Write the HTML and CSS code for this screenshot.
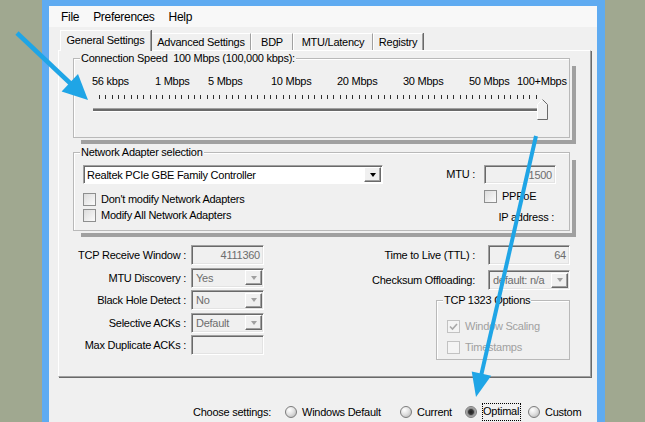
FILE: index.html
```html
<!DOCTYPE html>
<html lang="en">
<head>
    <meta charset="UTF-8">
    <title>TCP Optimizer</title>
    <link rel="stylesheet" href="styles.css">
</head>
<body>
    <div class="window">
        <div class="menubar">
            <span class="menu-item">File</span>
            <span class="menu-item">Preferences</span>
            <span class="menu-item">Help</span>
        </div>

        <div class="tabs">
            <span class="tab active tab-general">General Settings</span>
            <span class="tab tab-advanced">Advanced Settings</span>
            <span class="tab tab-bdp">BDP</span>
            <span class="tab tab-mtu">MTU/Latency</span>
            <span class="tab tab-registry">Registry</span>
        </div>

        <div class="panel">
            <div class="group group-speed">
                <span class="group-title">Connection Speed&nbsp; 100 Mbps (100,000 kbps):</span>
                <div class="speed-scale">
                    <span>56 kbps</span>
                    <span>1 Mbps</span>
                    <span>5 Mbps</span>
                    <span>10 Mbps</span>
                    <span>20 Mbps</span>
                    <span>30 Mbps</span>
                    <span>50 Mbps</span>
                    <span>100+Mbps</span>
                </div>
                <svg class="ticks" width="444" height="4" viewBox="0 0 444 4">
                    <path shape-rendering="crispEdges" stroke="#2e2e2e" stroke-width="1" fill="none"
                        d="M0.5 0v4m6.33-4v4m6.33-4v4m6.33-4v4m6.33-4v4m6.33-4v4m6.33-4v4m6.33-4v4m6.33-4v4m6.33-4v4m6.33-4v4m6.33-4v4m6.33-4v4m6.33-4v4m6.33-4v4m6.33-4v4m6.33-4v4m6.33-4v4m6.33-4v4m6.33-4v4m6.33-4v4m6.33-4v4m6.33-4v4m6.33-4v4m6.33-4v4m6.33-4v4m6.33-4v4m6.33-4v4m6.33-4v4m6.33-4v4m6.33-4v4m6.33-4v4m6.33-4v4m6.33-4v4m6.33-4v4m6.33-4v4m6.33-4v4m6.33-4v4m6.33-4v4m6.33-4v4m6.33-4v4m6.33-4v4m6.33-4v4m6.33-4v4m6.33-4v4m6.33-4v4m6.33-4v4m6.33-4v4m6.33-4v4m6.33-4v4m6.33-4v4m6.33-4v4m6.33-4v4m6.33-4v4m6.33-4v4m6.33-4v4m6.33-4v4m6.33-4v4m6.33-4v4m6.33-4v4m6.33-4v4m6.33-4v4m6.33-4v4m6.33-4v4m6.33-4v4m6.33-4v4m6.33-4v4m6.33-4v4m6.33-4v4m6.33-4v4"/>
                </svg>
                <div class="slider">
                    <div class="track"></div>
                    <svg class="thumb" width="11" height="21" viewBox="0 0 11 21">
                        <path d="M0.5 5.5L5.5 0.5L10.5 5.5V20.5H0.5Z" fill="#f0f0f0"/>
                        <path d="M0.5 20V5.5L5.5 0.5" stroke="#fff" fill="none"/>
                        <path d="M5.5 0.5L10.5 5.5V20.5H0.5" stroke="#6a6a6a" fill="none"/>
                    </svg>
                </div>
            </div>

            <div class="group group-adapter">
                <span class="group-title">Network Adapter selection</span>
                <div class="adapter-body">
                    <div class="adapter-left">
                        <div class="combo">
                            <span class="combo-text">Realtek PCIe GBE Family Controller</span>
                            <span class="combo-btn"></span>
                        </div>
                        <label class="check first"><span class="box"></span>Don't modify Network Adapters</label>
                        <label class="check"><span class="box"></span>Modify All Network Adapters</label>
                    </div>
                    <div class="adapter-right">
                        <span class="row-label">MTU :</span>
                        <span class="field num mtu">1500</span>
                        <label class="check pppoe"><span class="box"></span>PPPoE</label>
                        <span class="ip-label">IP address :</span>
                    </div>
                </div>
            </div>

            <div class="tcp">
                <div class="tcp-left">
                    <span class="row-label">TCP Receive Window :</span>
                    <span class="field num">4111360</span>
                    <span class="row-label">MTU Discovery :</span>
                    <span class="field select"><span>Yes</span><span class="select-btn"></span></span>
                    <span class="row-label">Black Hole Detect :</span>
                    <span class="field select"><span>No</span><span class="select-btn"></span></span>
                    <span class="row-label">Selective ACKs :</span>
                    <span class="field select"><span>Default</span><span class="select-btn"></span></span>
                    <span class="row-label">Max Duplicate ACKs :</span>
                    <span class="field"></span>
                </div>
                <div class="tcp-right">
                    <span class="row-label">Time to Live (TTL) :</span>
                    <span class="field num">64</span>
                    <span class="row-label">Checksum Offloading:</span>
                    <span class="field select"><span>default: n/a</span><span class="select-btn"></span></span>
                    <div class="group group-options">
                        <span class="group-title">TCP 1323 Options</span>
                        <label class="check disabled first">
                            <span class="box">
                                <svg width="11" height="11" viewBox="0 0 11 11"><path d="M2 5.5L4.5 8L9 3" stroke="#a8a8a8" stroke-width="1.6" fill="none"/></svg>
                            </span>Window Scaling
                        </label>
                        <label class="check disabled"><span class="box"></span>Timestamps</label>
                    </div>
                </div>
            </div>
        </div>

        <div class="choose">
            <span>Choose settings:</span>
            <span class="option"><span class="radio"></span>Windows Default</span>
            <span class="option"><span class="radio"></span>Current</span>
            <span class="option"><span class="radio checked"></span><span class="focus">Optimal</span></span>
            <span class="option"><span class="radio"></span>Custom</span>
        </div>
    </div>

    <svg class="arrows" width="645" height="422" viewBox="0 0 645 422">
        <line x1="17" y1="33" x2="71" y2="84" stroke="#1fa5e6" stroke-width="4.5"/>
        <polygon points="88,100 61.6,91.5 78,74.1" fill="#1fa5e6"/>
        <line x1="536" y1="136" x2="481" y2="376" stroke="#1fa5e6" stroke-width="4"/>
        <polygon points="476,397 491.2,375.8 471.7,371.4" fill="#1fa5e6"/>
    </svg>
</body>
</html>
```

FILE: styles.css
```css
* {
    box-sizing: border-box;
}

body {
    margin: 0;
    width: 645px;
    height: 422px;
    overflow: hidden;
    position: relative;
    background-color: #a0a890;
    font-family: "Liberation Sans", Arial, sans-serif;
    font-size: 11px;
    letter-spacing: -0.25px;
    color: #000;
}

.window {
    margin-left: 42px;
    width: 563px;
    height: 422px;
    border-style: solid;
    border-color: #5fabf1;
    border-width: 6px 8px 0 7px;
    background-color: #f0f0f0;
}

/* menu */
.menubar {
    display: flex;
    align-items: center;
    height: 21px;
    padding-left: 5px;
    background-color: #f8f8f8;
    font-size: 12px;
    letter-spacing: -0.3px;
}

.menu-item {
    padding: 0 7px;
}

/* tabs */
.tabs {
    display: flex;
    align-items: flex-end;
    height: 23px;
    margin-left: 9px;
    padding-left: 2px;
}

.tab {
    height: 17px;
    line-height: 16px;
    text-align: center;
    border-top: 1px solid #fff;
    border-left: 1px solid #fff;
    border-right: 1px solid #a0a0a0;
    box-shadow: 1px 0 0 #696969;
    background-color: #f0f0f0;
}

.tab.active {
    position: relative;
    z-index: 1;
    height: 21px;
    line-height: 18px;
    margin-bottom: -1px;
}

.tab-general { width: 91px; }
.tab-advanced { width: 100px; }
.tab-bdp { width: 42px; }
.tab-mtu { width: 80px; }
.tab-registry { width: 50px; }

.panel {
    margin-left: 9px;
    width: 533px;
    height: 327px;
    border: 1px solid;
    border-color: #fff #a0a0a0 #a0a0a0 #fff;
    box-shadow: 1px 1px 0 #696969;
}

/* group boxes */
.group {
    margin: 7px 0 0 14px;
    width: 497px;
    height: 80px;
    border: 1px solid #b9b9b9;
    box-shadow: inset 1px 1px 0 #fff, 2px 2px 0 #f0f0f0, 7px 7px 0 -1px #a0a0a0;
}

.group-title {
    display: block;
    width: max-content;
    margin: -7px 0 0 6px;
    padding: 0 1px;
    line-height: 13px;
    background-color: #f0f0f0;
}

.speed-scale {
    display: grid;
    grid-template-columns: 63px 53px 63px 66px 66px 66px 48px auto;
    margin-top: 10px;
    padding-left: 18px;
    line-height: 13px;
}

.ticks {
    display: block;
    margin: 7px 0 0 25px;
}

.slider {
    display: flex;
    align-items: center;
    height: 21px;
    margin-left: 19px;
}

.track {
    width: 444px;
    height: 4px;
    border-top: 1px solid #a0a0a0;
    border-bottom: 1px solid #fff;
    background-color: #6a6a6a;
}

.thumb {
    display: block;
}

.group-adapter {
    margin-top: 14px;
    height: 79px;
}

.adapter-body {
    display: flex;
    justify-content: space-between;
    margin-top: 6px;
    padding: 0 13px 0 9px;
}

.combo {
    display: flex;
    align-items: center;
    width: 300px;
    height: 19px;
    padding: 1px 1px 1px 3px;
    background-color: #fff;
    border: 1px solid;
    border-color: #a0a0a0 #fff #fff #a0a0a0;
    box-shadow: inset 1px 1px 0 #696969;
}

.combo-text {
    flex: 1;
}

.combo-btn, .select-btn {
    display: flex;
    align-items: center;
    justify-content: center;
    width: 17px;
    height: 15px;
    border: 1px solid;
    border-color: #fff #696969 #696969 #fff;
    box-shadow: inset -1px -1px 0 #a0a0a0;
    background-color: #f0f0f0;
}

.combo-btn::after, .select-btn::after {
    content: "";
    border-left: 3.5px solid transparent;
    border-right: 3.5px solid transparent;
    border-top: 4px solid #000;
}

.select-btn::after {
    border-top-color: #a0a0a0;
}

/* checkboxes */
.check {
    display: flex;
    align-items: center;
    height: 16px;
}

.adapter-left .check.first {
    margin-top: 7px;
}

.box {
    display: flex;
    align-items: center;
    justify-content: center;
    width: 13px;
    height: 13px;
    margin-right: 5px;
    border: 1px solid #8e8f8f;
    background: linear-gradient(135deg, #dcdcdc, #fbfbfb);
}

.check.disabled {
    color: #a0a0a0;
}

.check.disabled .box {
    border-color: #c2c2c2;
    background: #f4f4f4;
}

.adapter-right {
    display: grid;
    grid-template-columns: auto 72px;
    column-gap: 9px;
    align-content: start;
}

.row-label {
    text-align: right;
    line-height: 19px;
}

.field {
    display: block;
    height: 20px;
    padding: 0 3px 0 4px;
    line-height: 18px;
    color: #6d6d6d;
    background-color: #f0f0f0;
    border: 1px solid;
    border-color: #a0a0a0 #fff #fff #a0a0a0;
    box-shadow: inset 1px 1px 0 #696969, inset -1px -1px 0 #e3e3e3;
}

.field.num {
    text-align: right;
}

.field.mtu {
    height: 19px;
}

.pppoe {
    grid-column: 2;
    margin-top: 5px;
    height: 14px;
}

.ip-label {
    grid-column: 1 / -1;
    margin-top: 7px;
    padding-right: 2px;
    text-align: right;
    line-height: 14px;
}

/* tcp settings */
.tcp {
    display: flex;
    justify-content: space-between;
    width: 496px;
    margin: 14px 0 0 15px;
}

.tcp-left {
    display: grid;
    grid-template-columns: 112px 73px;
    grid-auto-rows: 20px;
    row-gap: 2.5px;
    column-gap: 5px;
}

.tcp-left .row-label, .tcp-right .row-label {
    line-height: 20px;
}

.select {
    display: flex;
    align-items: center;
    justify-content: space-between;
    padding: 0 1px 0 4px;
}

.tcp-right {
    display: grid;
    grid-template-columns: auto 82px;
    grid-template-rows: 21px 20px auto;
    row-gap: 4px;
    column-gap: 13px;
    align-content: start;
}

.group-options {
    grid-column: 1 / -1;
    justify-self: end;
    width: 134px;
    height: 60px;
    margin: 6px 0 0 0;
    box-shadow: inset 1px 1px 0 #fff;
}

.group-options .check {
    height: 14px;
    margin: 7px 0 0 10px;
}

.group-options .check.first {
    margin-top: 12px;
}

/* bottom radios */
.choose {
    display: grid;
    grid-template-columns: 92px 115px 65px 63px auto;
    align-items: center;
    height: 18px;
    margin: 26px 0 0 144px;
}

.option {
    display: flex;
    align-items: center;
}

.radio {
    width: 12px;
    height: 12px;
    margin-right: 5px;
    border-radius: 50%;
    border: 1px solid #7c7c7c;
    background: radial-gradient(circle at 35% 30%, #fff 0, #e2e2e2 45%, #b0b0b0 100%);
}

.radio.checked {
    background: radial-gradient(circle, #1e1e1e 0, #3a3a3a 2.5px, #8a8a8a 3.5px, #cfcfcf 6px);
}

.focus {
    padding: 1px 1px 2px 0;
    border: 1px dotted #000;
    line-height: 13px;
}

.arrows {
    position: absolute;
    top: 0;
    left: 0;
    pointer-events: none;
}
```
